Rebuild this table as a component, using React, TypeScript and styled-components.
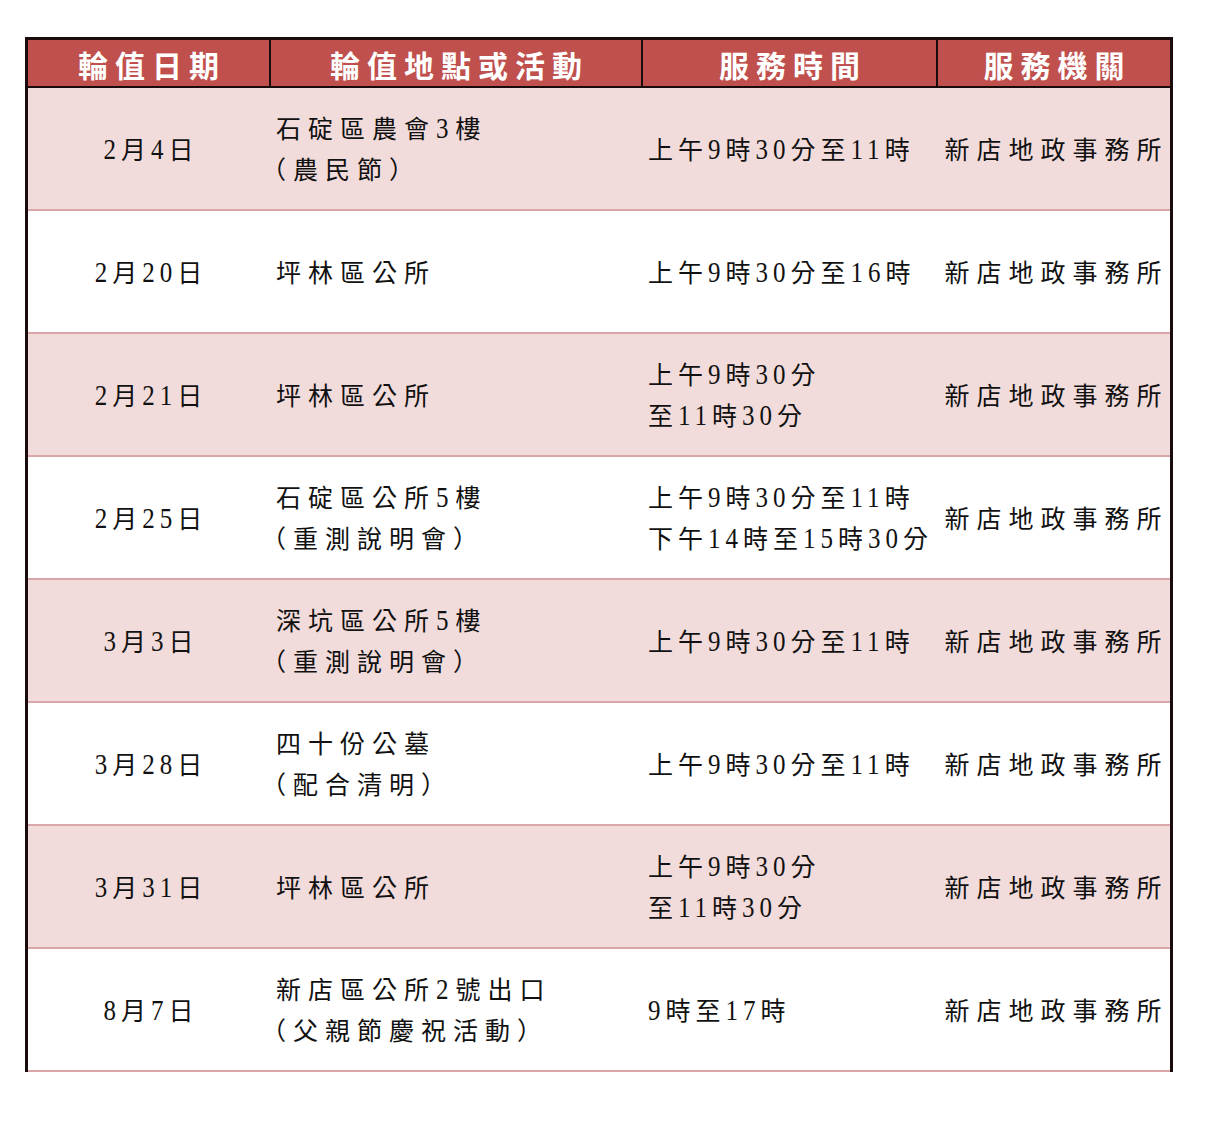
import React, { ReactElement, ReactNode } from 'react';
import styled, { createGlobalStyle } from 'styled-components';

const GlobalStyle = createGlobalStyle`
  body {
    margin: 0;
    background: #ffffff;
    font-family: "Liberation Serif", "Noto Sans CJK TC", serif;
  }
`;

const Page = styled.div`
  padding: 37px 0 0 25px;
  width: 1218px;
  height: 1131px;
  box-sizing: border-box;
`;

const Table = styled.div`
  width: 1148px;
  box-sizing: border-box;
  border: 3px solid #1a0c0c;
  border-bottom: none;
`;

const Grid = styled.div`
  display: grid;
  grid-template-columns: 241px 372px 295px 234px;
`;

const HeaderRow = styled(Grid)`
  height: 46px;
  background: #c0504d;
  border-bottom: 2px solid #1a0c0c;
`;

const HeaderCell = styled.div<{ $first?: boolean }>`
  display: flex;
  align-items: center;
  justify-content: center;
  box-sizing: border-box;
  border-left: ${(p) => (p.$first ? 'none' : '2px solid #1a0c0c')};
  color: #ffffff;
  font-family: "Noto Sans CJK TC", serif;
  font-weight: 700;
  font-size: 30px;
  letter-spacing: 7px;
  padding-left: 7px;
  padding-top: 2px;
`;

const Row = styled(Grid)<{ $shaded: boolean }>`
  height: 123px;
  box-sizing: border-box;
  background: ${(p) => (p.$shaded ? '#f2dcdb' : '#ffffff')};
  border-bottom: 2px solid #d9a7a8;
`;

const Cell = styled.div<{ $align: 'center' | 'left'; $spacing: number }>`
  display: flex;
  flex-direction: column;
  justify-content: center;
  align-items: ${(p) => (p.$align === 'center' ? 'center' : 'flex-start')};
  padding-left: ${(p) => (p.$align === 'center' ? `${p.$spacing}px` : '7px')};
  padding-top: 3px;
  color: #111111;
  font-size: 25px;
  line-height: 41px;
  letter-spacing: ${(p) => p.$spacing}px;
  white-space: nowrap;
`;

// half-width look for the opening bracket, as in the original sheet
const Line = styled.span<{ $paren?: boolean }>`
  margin-left: ${(p) => (p.$paren ? '-15px' : '0')};
`;

// tall, narrow numerals
const Num = styled.span`
  display: inline-block;
  line-height: 1;
  transform: scaleY(1.22);
  transform-origin: 50% 88%;
`;

const withNums = (text: string): ReactNode[] =>
  text.split(/(\d+)/).filter(Boolean).map((part, i) =>
    /^\d+$/.test(part) ? <Num key={i}>{part}</Num> : part
  );

type Entry = {
  date: string;
  place: string[];
  time: string[];
};

const entries: Entry[] = [
  { date: '2月4日', place: ['石碇區農會3樓', '（農民節）'], time: ['上午9時30分至11時'] },
  { date: '2月20日', place: ['坪林區公所'], time: ['上午9時30分至16時'] },
  { date: '2月21日', place: ['坪林區公所'], time: ['上午9時30分', '至11時30分'] },
  { date: '2月25日', place: ['石碇區公所5樓', '（重測說明會）'], time: ['上午9時30分至11時', '下午14時至15時30分'] },
  { date: '3月3日', place: ['深坑區公所5樓', '（重測說明會）'], time: ['上午9時30分至11時'] },
  { date: '3月28日', place: ['四十份公墓', '（配合清明）'], time: ['上午9時30分至11時'] },
  { date: '3月31日', place: ['坪林區公所'], time: ['上午9時30分', '至11時30分'] },
  { date: '8月7日', place: ['新店區公所2號出口', '（父親節慶祝活動）'], time: ['9時至17時'] },
];

const headers = ['輪值日期', '輪值地點或活動', '服務時間', '服務機關'];

const App = (): ReactElement => {
  return (
    <>
      <GlobalStyle />
      <Page>
        <Table>
          <HeaderRow>
            {headers.map((h, i) => (
              <HeaderCell key={h} $first={i === 0}>{h}</HeaderCell>
            ))}
          </HeaderRow>
          {entries.map((e, i) => (
            <Row key={e.date} $shaded={i % 2 === 0}>
              <Cell $align="center" $spacing={5}>
                <Line>{withNums(e.date)}</Line>
              </Cell>
              <Cell $align="left" $spacing={7}>
                {e.place.map((line) => (
                  <Line key={line} $paren={line.startsWith('（')}>{withNums(line)}</Line>
                ))}
              </Cell>
              <Cell $align="left" $spacing={5}>
                {e.time.map((line) => (
                  <Line key={line}>{withNums(line)}</Line>
                ))}
              </Cell>
              <Cell $align="center" $spacing={7}>
                <Line>新店地政事務所</Line>
              </Cell>
            </Row>
          ))}
        </Table>
      </Page>
    </>
  );
};

export default App;
